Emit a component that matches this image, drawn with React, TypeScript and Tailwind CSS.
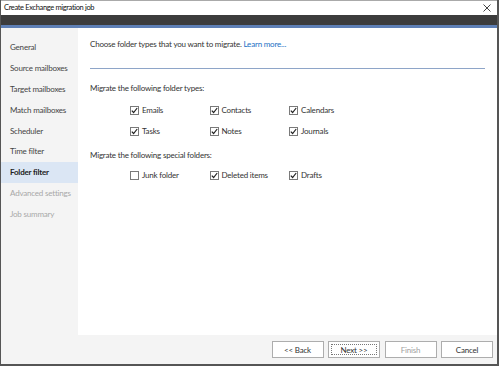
import React from "react";

const steps = [
  { label: "General" },
  { label: "Source mailboxes" },
  { label: "Target mailboxes" },
  { label: "Match mailboxes" },
  { label: "Scheduler" },
  { label: "Time filter" },
  { label: "Folder filter", active: true },
  { label: "Advanced settings", disabled: true },
  { label: "Job summary", disabled: true },
];

function Check({ label, checked }: { label: string; checked: boolean }) {
  return (
    <div className="flex items-center w-[79.5px] h-[12px]">
      <span className="w-[9px] h-[9px] border border-[#7a7a7a] bg-white flex items-center justify-center">
        {checked && (
          <svg width="7" height="7" viewBox="0 0 7 7">
            <path d="M0.8 3.6 L2.6 5.5 L6.2 1" fill="none" stroke="#222" strokeWidth="1.2" />
          </svg>
        )}
      </span>
      <span className="ml-[3px] text-[#333]">{label}</span>
    </div>
  );
}

function Btn({ label, disabled, focus }: { label: string; disabled?: boolean; focus?: boolean }) {
  return (
    <button
      type="button"
      className={`relative w-[52px] h-[17px] bg-white border border-[#adadad] flex items-center justify-center ${
        disabled ? "text-[#a0a0a0]" : "text-[#333]"
      }`}
    >
      {focus && <span className="absolute inset-[2px] border border-dotted border-[#777]" />}
      {label}
    </button>
  );
}

export default function App() {
  return (
    <div
      className="w-[499px] h-[366px] flex flex-col bg-white border-l border-r-2 border-b-2 border-[#555] text-[8px] tracking-[-0.2px] leading-[12px] overflow-hidden"
      style={{ fontFamily: 'Lato, "Liberation Sans", sans-serif' }}
    >
      <div className="h-[15px] flex items-center justify-between pl-[3px] pr-[6px] border-t border-[#aaa]">
        <span className="text-[7.5px] tracking-[-0.35px] text-[#111]">Create Exchange migration job</span>
        <svg width="8" height="8" viewBox="0 0 8 8">
          <path d="M0.5 0.5 L7.5 7.5 M7.5 0.5 L0.5 7.5" stroke="#444" strokeWidth="1" />
        </svg>
      </div>
      <div className="h-[10px] bg-[#3c3c3c]" />
      <div className="h-[3px] bg-[#5e7fb5]" />
      <div className="flex-1 flex">
        <div className="w-[77px] bg-[#f4f4f4] pt-[9px]">
          {steps.map((s) => (
            <div
              key={s.label}
              className={`h-[20.8px] flex items-center pl-[9px] ${
                s.active ? "bg-[#dbe6f4] font-bold text-[#222]" : s.disabled ? "text-[#a8a8a8]" : "text-[#444]"
              }`}
            >
              {s.label}
            </div>
          ))}
        </div>
        <div className="flex-1 pl-[12px] pr-[12px] pt-[10px]">
          <div className="text-[#333]">
            Choose folder types that you want to migrate. <span className="text-[#1a6fc4]">Learn more...</span>
          </div>
          <div className="mt-[18px] h-px bg-[#8ea5c8]" />
          <div className="mt-[13px] text-[#333]">Migrate the following folder types:</div>
          <div className="pl-[40px] mt-[10px] flex flex-col gap-[9px]">
            <div className="flex">
              <Check label="Emails" checked />
              <Check label="Contacts" checked />
              <Check label="Calendars" checked />
            </div>
            <div className="flex">
              <Check label="Tasks" checked />
              <Check label="Notes" checked />
              <Check label="Journals" checked />
            </div>
          </div>
          <div className="mt-[12px] text-[#333]">Migrate the following special folders:</div>
          <div className="pl-[40px] mt-[8px] flex">
            <Check label="Junk folder" checked={false} />
            <Check label="Deleted items" checked />
            <Check label="Drafts" checked />
          </div>
        </div>
      </div>
      <div className="h-[29px] bg-[#f4f4f4] flex items-center justify-end gap-[4.5px] pr-[4px]">
        <Btn label="<< Back" />
        <Btn label="Next >>" focus />
        <Btn label="Finish" disabled />
        <Btn label="Cancel" />
      </div>
    </div>
  );
}
